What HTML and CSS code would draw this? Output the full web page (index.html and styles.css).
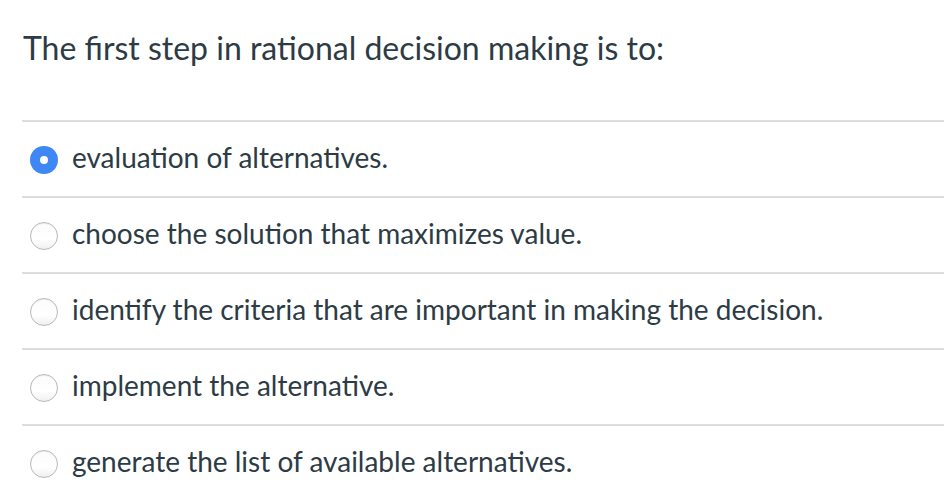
FILE: index.html
```html
<!DOCTYPE html>
<html>
<head>
<meta charset="utf-8">
<link rel="stylesheet" href="styles.css">
</head>
<body>
<div class="question">
  <div class="prompt">The first step in rational decision making is to:</div>
  <div class="answers">
    <label class="answer"><span class="radio checked"></span><span class="text">evaluation of alternatives.</span></label>
    <label class="answer"><span class="radio"></span><span class="text">choose the solution that maximizes value.</span></label>
    <label class="answer"><span class="radio"></span><span class="text">identify the criteria that are important in making the decision.</span></label>
    <label class="answer"><span class="radio"></span><span class="text">implement the alternative.</span></label>
    <label class="answer"><span class="radio"></span><span class="text">generate the list of available alternatives.</span></label>
  </div>
</div>
</body>
</html>
```
FILE: styles.css
```css
html, body {
  margin: 0;
  padding: 0;
  background: #ffffff;
}
body {
  font-family: Lato, "Noto Sans", sans-serif;
  color: #2d3b45;
}
.question {
  padding-left: 22px;
}
.prompt {
  font-size: 32px;
  line-height: 38px;
  height: 120px;
  box-sizing: border-box;
  padding-top: 29px;
  padding-left: 1px;
}
.answers {
  display: flex;
  flex-direction: column;
}
.answer {
  display: flex;
  align-items: center;
  height: 76px;
  box-sizing: border-box;
  border-top: 2px solid #dddddd;
  padding-left: 8px;
  padding-top: 2px;
}
.radio {
  width: 28px;
  height: 28px;
  box-sizing: border-box;
  border-radius: 50%;
  border: 1px solid #b8b8b8;
  background: linear-gradient(#fbfbfb, #ffffff 60%, #f0f0f0);
  box-shadow: inset 0 1px 1px rgba(0,0,0,0.05);
  flex: none;
  margin-right: 14px;
  position: relative;
}
.radio.checked {
  border: none;
  background: #3f87f5;
  box-shadow: none;
}
.radio.checked::after {
  content: "";
  position: absolute;
  left: 10px;
  top: 10px;
  width: 8px;
  height: 8px;
  border-radius: 50%;
  background: #ffffff;
}
.text {
  font-size: 28px;
  line-height: 32px;
  padding-bottom: 7px;
}
```
